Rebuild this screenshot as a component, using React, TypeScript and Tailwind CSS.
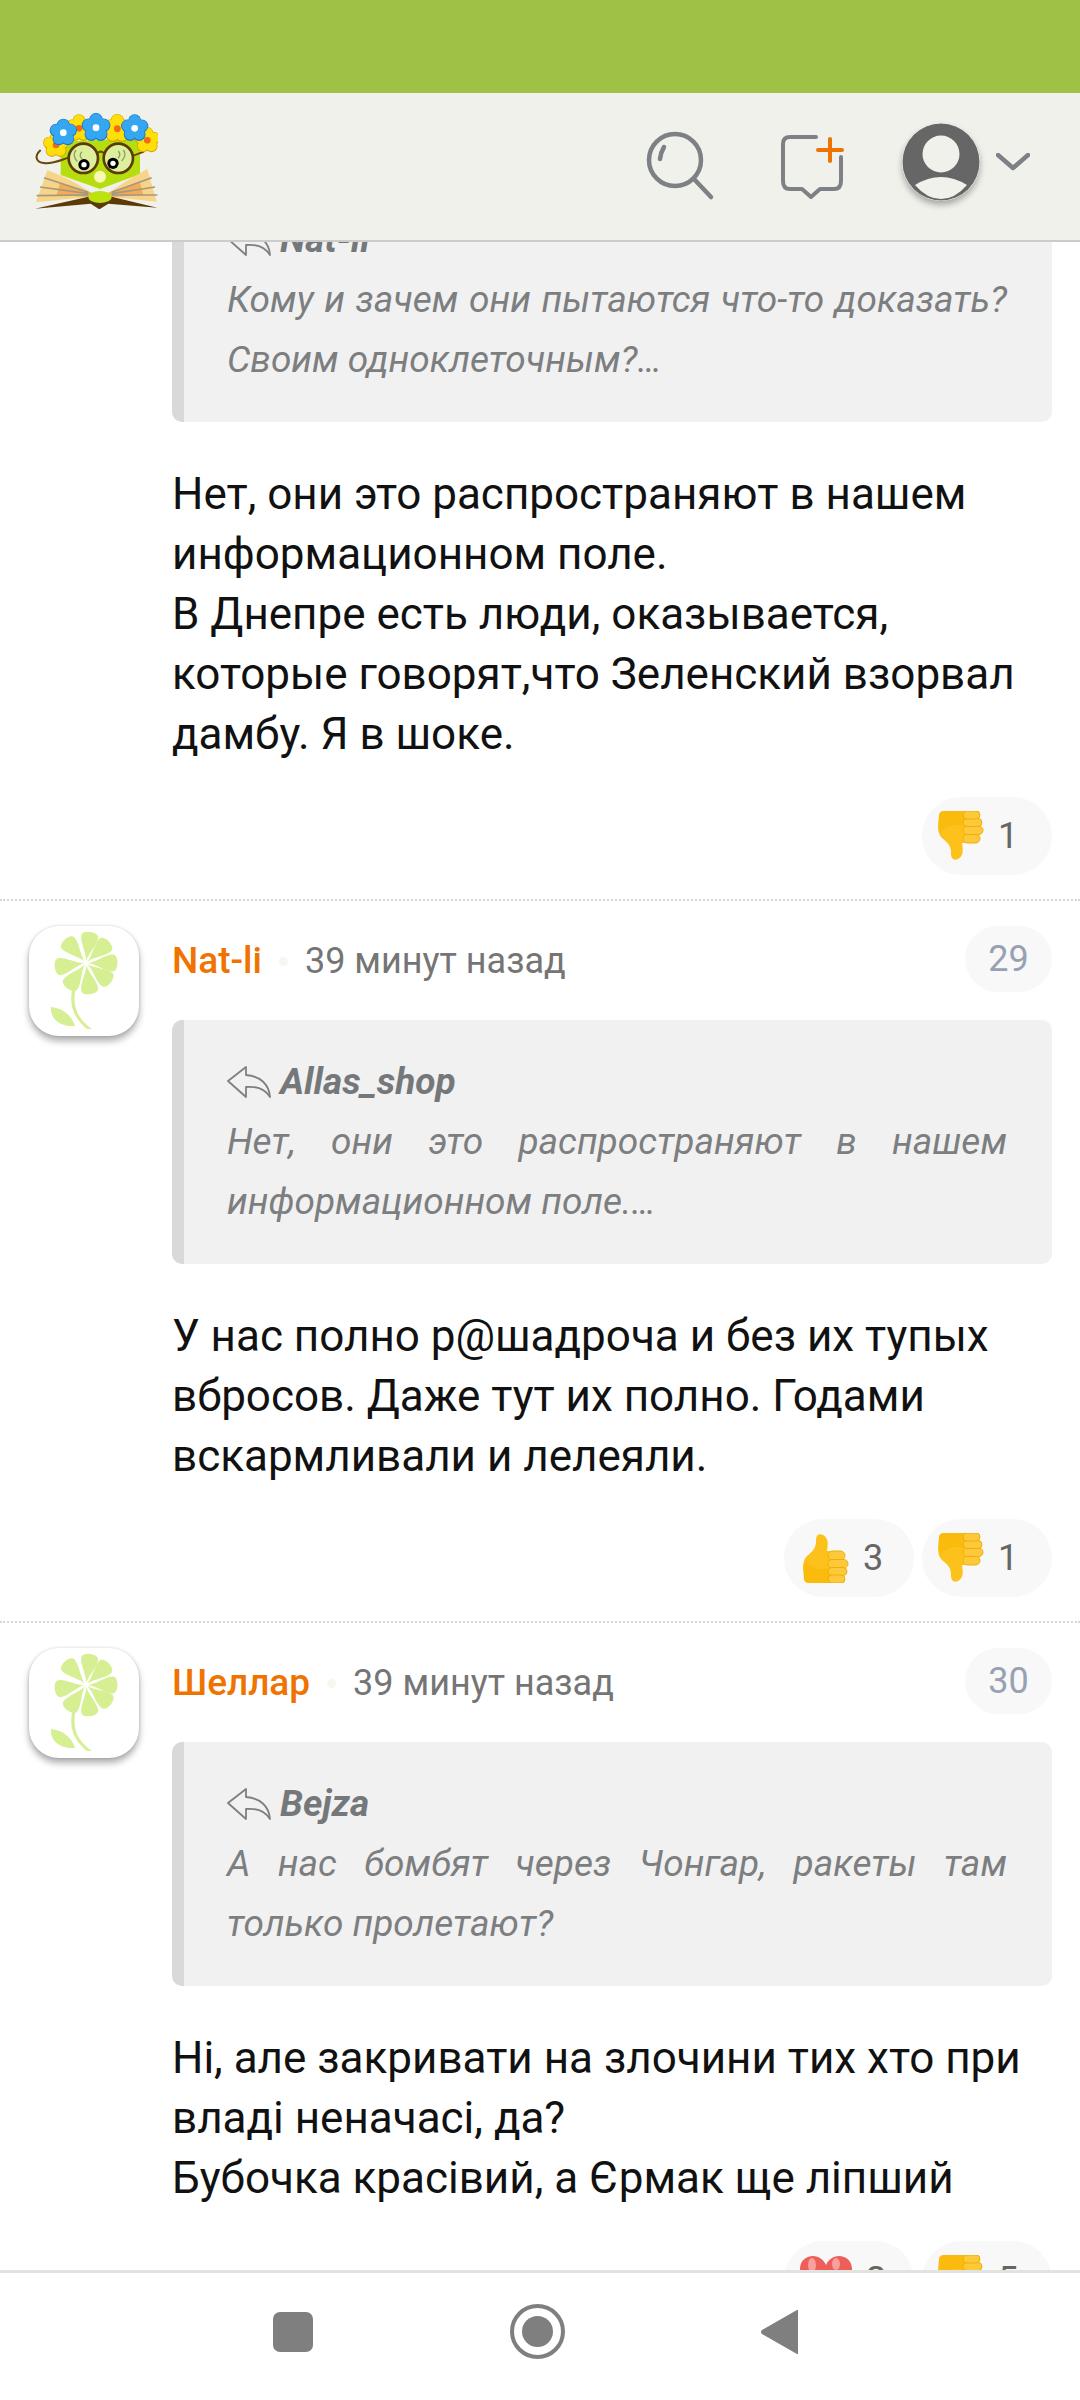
const comments = [
  {
    id: 28,
    showHead: false,
    quoteAuthor: "Nat-li",
    quote: "Кому и зачем они пытаются что-то доказать? Своим одноклеточным?…",
    text: "Нет, они это распространяют в нашем информационном поле.\nВ Днепре есть люди, оказывается, которые говорят,что Зеленский взорвал дамбу. Я в шоке.",
    reactions: [{ kind: "down", count: 1 }],
  },
  {
    id: 29,
    showHead: true,
    author: "Nat-li",
    quoteAuthor: "Allas_shop",
    quote: "Нет, они это распространяют в нашем информационном поле.…",
    text: "У нас полно р@шадроча и без их тупых вбросов. Даже тут их полно. Годами вскармливали и лелеяли.",
    reactions: [
      { kind: "up", count: 3 },
      { kind: "down", count: 1 },
    ],
  },
  {
    id: 30,
    showHead: true,
    author: "Шеллар",
    quoteAuthor: "Bejza",
    quote: "А нас бомбят через Чонгар, ракеты там только пролетают?",
    text: "Ні, але закривати на злочини тих хто при владі неначасі, да?\nБубочка красівий, а Єрмак ще ліпший",
    reactions: [
      { kind: "heart", count: 2 },
      { kind: "down", count: 5 },
    ],
  },
];

function LogoFlower({ x, y, color, dark, core, r = 15 }: { x: number; y: number; color: string; dark: string; core: string; r?: number }) {
  const petals = [0, 72, 144, 216, 288].map((a) => {
    const rad = ((a - 90) * Math.PI) / 180;
    return { cx: x + Math.cos(rad) * r * 1.25, cy: y + Math.sin(rad) * r * 1.25 };
  });
  return (
    <g>
      {petals.map((p, i) => (
        <circle key={i} cx={p.cx} cy={p.cy} r={r + 1.5} fill={dark} />
      ))}
      {petals.map((p, i) => (
        <circle key={i} cx={p.cx} cy={p.cy - 1} r={r - 1} fill={color} />
      ))}
      <circle cx={x} cy={y} r={r} fill={color} />
      <circle cx={x} cy={y} r={10} fill={core} />
    </g>
  );
}

function Logo() {
  const blue = "#35a7f2";
  const blueDark = "#1a78c8";
  const yellow = "#ffdf0a";
  const yellowDark = "#d9a800";
  return (
    <svg viewBox="42 54 372 288" className="h-[96px] w-[124px]">
      <path d="M122 140 L360 130 L360 238 L240 282 L122 240 Z" fill="#b6de0e" />
      <path d="M48 322 L82 226 Q150 250 218 296 L205 306 Z" fill="#f8d488" />
      <path d="M410 320 L382 222 Q320 255 262 296 L275 306 Z" fill="#f8d488" />
      <path d="M120 264 L225 296 L205 306 L110 300 Z" fill="#f39c46" opacity="0.75" />
      <path d="M360 262 L255 296 L275 306 L370 300 Z" fill="#f39c46" opacity="0.75" />
      <path d="M72 248 L205 292 M60 276 L205 296 M50 302 L205 300 M395 248 L275 292 M405 276 L275 296 M412 300 L275 300" stroke="#a09a80" strokeWidth="5" fill="none" />
      <path d="M45 341 L205 305 L240 316 L275 305 L412 338 L265 326 L238 343 L212 326 Z" fill="#5b3a06" />
      <ellipse cx="240" cy="306" rx="35" ry="18" fill="#bce20f" />
      <circle cx="240" cy="245" r="18" fill="#f8f7b4" />
      <path d="M145 188 C120 196 95 208 72 204 C50 202 40 185 62 165" fill="none" stroke="#6b4408" strokeWidth="6" />
      <path d="M232 175 Q242 165 252 175 M340 182 L372 170" fill="none" stroke="#6b4408" strokeWidth="6" />
      <circle cx="190" cy="190" r="44" fill="#dcef9c" stroke="#5c3b06" strokeWidth="8" />
      <circle cx="295" cy="190" r="44" fill="#dcef9c" stroke="#5c3b06" strokeWidth="8" />
      <path d="M168 165 Q155 180 172 200 M186 170 Q175 180 186 192 M310 165 Q322 180 305 198 M295 168 Q304 180 294 190" fill="none" stroke="#8e9f63" strokeWidth="4" />
      <circle cx="192" cy="209" r="17" fill="#000" />
      <circle cx="192" cy="209" r="8" fill="#fff" />
      <circle cx="279" cy="205" r="17" fill="#000" />
      <circle cx="279" cy="205" r="8" fill="#fff" />
      <LogoFlower x={108} y={150} color={yellow} dark={yellowDark} core="#f26a14" r={17} />
      <LogoFlower x={382} y={136} color={yellow} dark={yellowDark} core="#f26a14" r={17} />
      <LogoFlower x={177} y={100} color={yellow} dark={yellowDark} core="#f26a14" r={18} />
      <LogoFlower x={292} y={101} color={yellow} dark={yellowDark} core="#f26a14" r={19} />
      <LogoFlower x={130} y={113} color={blue} dark={blueDark} core="#fff" r={18} />
      <LogoFlower x={228} y={98} color={blue} dark={blueDark} core="#fff" r={19} />
      <LogoFlower x={344} y={100} color={blue} dark={blueDark} core="#fff" r={18} />
    </svg>
  );
}

function FlowerAvatar() {
  const angles = [8, 47, 90, 128, 172, 216, 262, 318];
  return (
    <div className="h-[110px] w-[110px] shrink-0 rounded-[30px] bg-white shadow-[0_5px_7px_rgba(0,0,0,0.32),0_0_3px_rgba(0,0,0,0.15)]">
      <svg viewBox="0 0 110 110" className="h-full w-full">
        <path d="M47 60 C42 82 50 94 63 103 L58 103 C45 92 39 80 44 60 Z" fill="#d5ef92" />
        <path d="M22 81 C34 82 43 90 46 100 C32 101 21 94 22 81 Z" fill="#d5ef92" />
        {angles.map((a) => (
          <path
            key={a}
            d="M0 -2 C-1 -10 -9 -20 -8.5 -27 C-8 -33 8 -33 8.5 -27 C9 -20 1 -10 0 -2 Z"
            fill="#d5ef92"
            transform={`translate(57 37) rotate(${a})`}
          />
        ))}
      </svg>
    </div>
  );
}

function ReplyIcon() {
  return (
    <svg viewBox="0 0 44 32" className="h-[32px] w-[44px] shrink-0" fill="none" stroke="#7d7f81" strokeWidth="1.8" strokeLinejoin="round">
      <path d="M19 1 L1 15 L19 31 L19 21 C29 20 38 23 43 31 C42 18 33 10 19 9 Z" />
    </svg>
  );
}

function Thumb({ down }: { down?: boolean }) {
  return (
    <svg viewBox="0 0 46 50" className={`h-[50px] w-[46px] shrink-0 ${down ? "-scale-y-100" : ""}`}>
      <path d="M20 2 C15 0 13 3 13 8 C13 15 10 18 4 23 C1 26 0 30 0 36 L1 46 C1 48 3 50 6 50 L32 50 L32 18 L24 18 C25 12 26 5 20 2 Z" fill="#fcc21b" />
      <path d="M2 28 C8 34 14 38 26 35 L28 50 L6 50 C3 50 1 48 1 46 Z" fill="#f7b600" opacity="0.55" />
      <rect x="25" y="18" width="17" height="9" rx="4.5" fill="#fdc93a" stroke="#eeb008" strokeWidth="1" />
      <rect x="25" y="26.5" width="20" height="8.5" rx="4.2" fill="#fdc93a" stroke="#eeb008" strokeWidth="1" />
      <rect x="25" y="34.5" width="19" height="8" rx="4" fill="#fdc93a" stroke="#eeb008" strokeWidth="1" />
      <rect x="25" y="42" width="17" height="8" rx="4" fill="#fdc93a" stroke="#eeb008" strokeWidth="1" />
    </svg>
  );
}

function Heart() {
  return (
    <svg viewBox="0 0 52 48" className="h-[48px] w-[52px] shrink-0">
      <path d="M26 46 C10 34 0 24 0 13 C0 5 6 0 13 0 C19 0 24 4 26 9 C28 4 33 0 39 0 C46 0 52 5 52 13 C52 24 42 34 26 46 Z" fill="#ef5f5a" />
      <ellipse cx="12" cy="9" rx="4" ry="7" fill="#f9a09c" />
      <ellipse cx="36" cy="8" rx="4" ry="6" fill="#f9a09c" />
    </svg>
  );
}

function Reaction({ kind, count }: { kind: string; count: number }) {
  return (
    <div className={`flex h-[78px] w-[130px] items-center gap-[14px] rounded-[39px] bg-[#f8f8f8] text-[36px] text-[#666] ${kind === "up" ? "pl-[19px]" : "pl-[16px]"}`}>
      {kind === "heart" ? <Heart /> : <Thumb down={kind === "down"} />}
      <span>{count}</span>
    </div>
  );
}

function Quote({ author, text }: { author: string; text: string }) {
  return (
    <div className="rounded-[10px] border-l-[12px] border-[#d9d9d9] bg-[#f1f1f1] pt-[32px] pr-[45px] pb-[32px] pl-[43px] text-[37px] leading-[60px] text-[#7c7e80] italic">
      <div className="flex items-center gap-[9px] font-bold text-[#75787a]">
        <ReplyIcon />
        <span>{author}</span>
      </div>
      <p className="text-justify">{text}</p>
    </div>
  );
}

function Comment({ comment, last }: { comment: (typeof comments)[number]; last: boolean }) {
  return (
    <article className={`flex pt-[25px] pb-[24px] pl-[29px] pr-[28px] ${last ? "" : "border-b-2 border-dotted border-[#d6d6d6]"}`}>
      <div className="w-[143px] shrink-0">{comment.showHead && <FlowerAvatar />}</div>
      <div className="min-w-0 flex-1">
        {comment.showHead && (
          <div className="mb-[28px] flex h-[66px] items-center justify-between">
            <div className="flex items-center pt-[4px] text-[36px] text-[#757575]">
              <span className="text-[37px] font-medium text-[#ee7300]">{comment.author}</span>
              <span className="mx-[17px] h-[9px] w-[9px] rounded-full bg-[#f7f7f2]" />
              <span>39 минут назад</span>
            </div>
            <div className="flex h-[66px] w-[87px] items-center justify-center rounded-[33px] bg-[#f8f8f8] text-[36px] text-[#98a1b3]">
              {comment.id}
            </div>
          </div>
        )}
        <Quote author={comment.quoteAuthor} text={comment.quote} />
        <p className="mt-[42px] text-[44px] leading-[60px] whitespace-pre-line text-[#111]">{comment.text}</p>
        <div className="mt-[33px] flex justify-end gap-[8px]">
          {comment.reactions.map((r) => (
            <Reaction key={r.kind} kind={r.kind} count={r.count} />
          ))}
        </div>
      </div>
    </article>
  );
}

export default function App() {
  return (
    <div className="flex h-[2400px] w-[1080px] flex-col overflow-hidden bg-white font-[family-name:Roboto,sans-serif]">
      <div className="h-[93px] shrink-0 bg-[#9fc146]" />

      <header className="flex h-[149px] shrink-0 items-center border-b-2 border-[#cccccc] bg-[#f0f1ea] pr-[50px] pb-[11px] pl-[34px]">
        <Logo />
        <div className="ml-auto flex items-center">
          <svg viewBox="0 0 72 72" className="mt-[11px] h-[72px] w-[72px]" fill="none" stroke="#7d8084" strokeWidth="4.5" strokeLinecap="round">
            <circle cx="30" cy="29" r="26" />
            <path d="M49 48 L66 66" />
            <path d="M15 28 Q15.5 22 19 16" />
          </svg>
          <svg viewBox="0 0 66 66" className="mt-[11px] ml-[63px] h-[66px] w-[66px]" fill="none" stroke="#7d8084" strokeWidth="4" strokeLinecap="round" strokeLinejoin="round">
            <path d="M36 3 L10 3 Q3 3 3 10 L3 47 Q3 55 10 55 L22 55 L31 63 L40 55 L54 55 Q61 55 61 47 L61 23" />
            <path d="M50 5 L50 27 M38 16 L62 16" stroke="#ee7300" />
          </svg>
          <svg viewBox="0 0 78 78" className="mt-[2px] ml-[56px] h-[78px] w-[78px] rounded-full shadow-[0_4px_6px_rgba(0,0,0,0.3)]">
            <circle cx="39" cy="39" r="38.5" fill="#666666" />
            <circle cx="39" cy="31" r="18.5" fill="#f0f1ea" />
            <path d="M13 62 Q39 46 65 62 Q53 76 39 76 Q25 76 13 62 Z" fill="#f0f1ea" />
          </svg>
          <svg viewBox="0 0 34 18" className="mt-[2px] ml-[16px] h-[18px] w-[34px]" fill="none" stroke="#7d8084" strokeWidth="4.5" strokeLinecap="round" strokeLinejoin="round">
            <path d="M2 2 L17 15 L32 2" />
          </svg>
        </div>
      </header>

      <main className="min-h-0 flex-1 overflow-hidden">
        <div className="-mt-[89px]">
          {comments.map((c, i) => (
            <Comment key={c.id} comment={c} last={i === comments.length - 1} />
          ))}
        </div>
      </main>

      <nav className="relative flex h-[130px] shrink-0 items-center border-t-[3px] border-[#e0e3de] bg-white pb-[10px] pl-[273px]">
        <div className="h-[40px] w-[40px] rounded-[7px] bg-[#7f7f7f]" />
        <div className="ml-[197px] flex h-[55px] w-[55px] items-center justify-center rounded-full border-[4px] border-[#7f7f7f]">
          <div className="h-[31px] w-[31px] rounded-full bg-[#7f7f7f]" />
        </div>
        <svg viewBox="0 0 38 46" className="ml-[196px] h-[46px] w-[38px]">
          <path d="M36 1 L37 1 L37 45 L36 45 L1 25 Q-1 23 1 21 Z" fill="#7f7f7f" />
        </svg>
      </nav>
    </div>
  );
}
